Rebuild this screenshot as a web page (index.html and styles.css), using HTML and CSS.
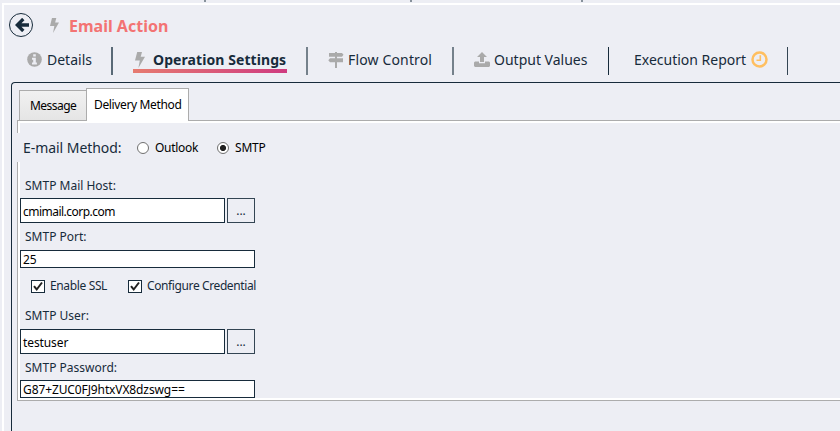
FILE: index.html
```html
<!DOCTYPE html>
<html lang="en">
<head>
<meta charset="utf-8">
<title>Email Action</title>
<link rel="stylesheet" href="styles.css">
</head>
<body>
<svg class="defs" width="0" height="0">
  <symbol id="bolt" viewBox="0 0 10 16" preserveAspectRatio="none"><path d="M2.200 0h4.800L5.700 4.700H10L3.400 16 4.800 8.400H0z"/></symbol>
</svg>
<div class="splits"><i></i><i></i><i></i></div>
<main class="window">
  <header class="title">
    <button class="back" aria-label="Back"><svg width="14" height="14" viewBox="0 0 14 14"><path d="M8.300 1 2.300 7l6 6M2.500 7H14" fill="none" stroke="#172b3b" stroke-width="3.300"/></svg></button>
    <svg class="bolt" width="9" height="15"><use href="#bolt"/></svg>
    <h1>Email Action</h1>
  </header>
  <nav class="nav">
    <a class="item details"><svg width="15" height="15" viewBox="0 0 15 15"><circle cx="7.500" cy="7.500" r="7.300"/><path fill="#edeef4" d="M6.200 2.200h2.600v2.400H6.200zM5 5.700h3.800v4.800h1.100v2H5v-2h1.200V7.700H5z"/></svg><span>Details</span></a>
    <a class="item operation"><svg width="10" height="16"><use href="#bolt"/></svg><span>Operation Settings</span></a>
    <a class="item flow"><svg width="16" height="16" viewBox="0 0 16 16"><path d="M7 0h2v1h5l1.500 1.800L14 4.700H9v1.600h6v4H9V16H7v-5.700H2L.3 8.300 2 6.300h5V4.700H1V1h6z"/></svg><span>Flow Control</span></a>
    <a class="item output"><svg width="16" height="15" viewBox="0 0 16 15"><path d="M8 0l5 5H10v5H6V5H3zM1 9.500h4v1.700h6V9.500h4l1 1V14l-1 1H1l-1-1v-3.500z"/></svg><span>Output Values</span></a>
    <a class="item report"><span>Execution Report</span><svg width="17" height="17" viewBox="0 0 17 17"><g fill="none" stroke="#ffbf60"><circle cx="8.500" cy="8.500" r="7" stroke-width="2.500"/><path d="M9.300 4.200V9.200H5.500" stroke-width="1.600"/></g></svg></a>
  </nav>
  <section class="panel">
    <div class="tabs"><div class="tab"><span>Message</span></div><div class="tab active"><span>Delivery Method</span></div></div>
    <div class="content">
      <div class="method"><span class="caption">E-mail Method:</span>
        <label class="outlook"><i class="radio"></i><span>Outlook</span></label>
        <label class="smtp"><i class="radio on"></i><span>SMTP</span></label>
      </div>
      <form class="form">
        <div class="label host">SMTP Mail Host:</div>
        <div class="row"><div class="input"><span class="v-host">cmimail.corp.com</span></div><div class="more">...</div></div>
        <div class="label port">SMTP Port:</div>
        <div class="input short"><span>25</span></div>
        <div class="checks">
          <label class="ssl"><i class="check"><svg width="12" height="11" viewBox="0 0 12 11"><path d="M2 5.200 4.700 8.500 10 1.500"/></svg></i><span>Enable SSL</span></label>
          <label class="cred"><i class="check"><svg width="12" height="11" viewBox="0 0 12 11"><path d="M2 5.200 4.700 8.500 10 1.500"/></svg></i><span>Configure Credential</span></label>
        </div>
        <div class="label user">SMTP User:</div>
        <div class="row"><div class="input"><span class="v-user">testuser</span></div><div class="more">...</div></div>
        <div class="label pass">SMTP Password:</div>
        <div class="input short"><span class="v-pass">G87+ZUC0FJ9htxVX8dzswg==</span></div>
      </form>
    </div>
  </section>
</main>
</body>
</html>
```

FILE: styles.css
```css
* { box-sizing: border-box; }
body { margin: 0; width: 840px; height: 431px; overflow: hidden; background: #edeef4; color: #172b3b; font: 12px/16px "Noto Sans", "Open Sans", sans-serif; white-space: nowrap; }
.defs { position: absolute; }
.splits { height: 3px; display: grid; grid-template-columns: 206px 206px 171px; }
.splits i { height: 2px; border-right: 2px solid #87919b; }
.window { margin-left: 2px; height: 428px; border: solid #fff; border-width: 2px 0 0 2px; }
.title { height: 42px; display: flex; align-items: flex-start; padding-left: 5px; }
.back { width: 24px; height: 24px; margin-top: 8px; border: 1px solid #172b3b; border-radius: 50%; background: none; padding: 0 0 0 2px; display: flex; align-items: center; justify-content: center; }
.back svg { flex: none; }
.bolt { margin: 13px 0 0 17px; fill: #aaa; flex: none; }
h1 { margin: 10px 0 0 10px; font-size: 16px; line-height: 22px; color: #f37373; }
.nav { height: 28px; display: flex; font-size: 14px; fill: #aaa; }
.item { display: flex; align-items: center; height: 28px; border-right: 2px solid #75818b; }
.item span { line-height: 20px; margin-top: -2px; }
.item svg { flex: none; margin-top: -3px; }
.details { width: 109px; padding-left: 23px; gap: 5px; border-color: #596976; }
.operation { width: 195px; padding-left: 22px; gap: 8px; font-weight: bold; background: linear-gradient(90deg, #e67b70, #cf3b80) 20px 22px / 154px 4px no-repeat; }
.operation span { letter-spacing: 0.080px; }
.flow { width: 146px; padding-left: 20px; gap: 4px; }
.flow span { letter-spacing: 0.150px; }
.output { width: 155px; padding-left: 20px; gap: 4px; border-right: 1px solid #172b3b; }
.report { width: 179px; padding-left: 25px; gap: 5px; border-right: 1px solid #344553; }
.panel { margin: 7px 0 0 7px; height: 360px; border: solid #172b3b; border-width: 1px 0 0 1px; border-top-left-radius: 4px; padding: 5px 0 0 5px; }
.tabs { display: flex; align-items: flex-end; height: 33px; padding-left: 2px; position: relative; margin-bottom: -1px; }
.tab { width: 67px; height: 30px; margin-bottom: 1px; padding: 7px 0 0 10px; border: 1px solid #acacac; border-width: 1px 0 0 1px; background: linear-gradient(#f1f1f1, #e5e5e5); color: #000; letter-spacing: -0.550px; }
.active { width: 103px; height: 33px; margin: 0; padding: 8px 0 0 7px; border-width: 1px 1px 0; background: #fff; letter-spacing: -0.360px; }
.content { height: 281px; border: solid #acacac; border-width: 1px 0 1px 1px; padding: 2px 0 0 2px; background: linear-gradient(#fff, #fff) 0 0 / 100% 2px no-repeat, linear-gradient(#fff, #fff) 0 0 / 2px 100% no-repeat, linear-gradient(#fff, #fff) 0 100% / 100% 2px no-repeat; }
.method { height: 29px; margin: 10px 0 0 -3px; padding-left: 6px; background: #edeef4; position: relative; display: flex; align-items: center; }
.caption { font-size: 14px; width: 114px; letter-spacing: -0.050px; }
label { display: flex; align-items: center; }
.method label { color: #000; gap: 6px; }
.outlook { width: 80px; letter-spacing: -0.300px; }
.smtp { letter-spacing: -0.200px; }
.radio { width: 12px; height: 12px; border: 1px solid #707070; border-radius: 50%; background: #fff; }
.radio.on { background: radial-gradient(circle, #212121 2.700px, #fff 3.400px); }
.label { padding-left: 5px; height: 16px; }
.host { margin: 16px 0 4px; }
.row { display: flex; gap: 2px; }
.input { width: 205px; height: 25px; border: 1px solid #172b3b; background: #fff; color: #000; padding: 5px 0 0 2px; }
.short { width: 235px; height: 18px; padding-top: 1px; }
.more { width: 28px; height: 25px; border: 1px solid #344553; text-align: center; padding-top: 4px; }
.v-host { letter-spacing: -0.520px; }
.v-user { letter-spacing: -0.100px; }
.v-pass { letter-spacing: -0.110px; }
.port { margin: 6px 0 5px; }
.checks { display: flex; height: 36px; padding: 0 0 0 11px; }
.checks label { gap: 5px; }
.ssl { width: 97px; letter-spacing: -0.360px; }
.cred { letter-spacing: -0.390px; }
.check { width: 14px; height: 13px; border: 1px solid #172b3b; background: #fff; }
.check svg { display: block; fill: none; stroke: #212121; stroke-width: 2; }
.user { margin: 4px 0 5px; }
.pass { margin: 6px 0 4px; }
```
